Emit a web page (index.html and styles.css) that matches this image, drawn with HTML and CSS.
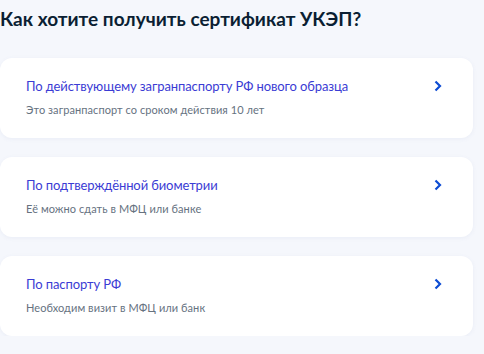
FILE: index.html
```html
<!DOCTYPE html>
<html lang="ru">
<head>
  <meta charset="UTF-8">
  <title>Сертификат УКЭП</title>
  <link rel="stylesheet" href="styles.css">
</head>
<body>

<div class="page">
  <h1>Как хотите получить сертификат УКЭП?</h1>

  <div class="options">
    <a class="card" href="#">
      <div class="card-text">
        <div class="card-title">По действующему загранпаспорту РФ нового образца</div>
        <div class="card-sub">Это загранпаспорт со сроком действия 10 лет</div>
      </div>
      <svg class="chevron" width="10" height="12" viewBox="0 0 10 12"><path d="M2.5 1.5 L7 6 L2.5 10.5" fill="none" stroke="#0d4cd3" stroke-width="2.2"/></svg>
    </a>

    <a class="card" href="#">
      <div class="card-text">
        <div class="card-title">По подтверждённой биометрии</div>
        <div class="card-sub">Её можно сдать в МФЦ или банке</div>
      </div>
      <svg class="chevron" width="10" height="12" viewBox="0 0 10 12"><path d="M2.5 1.5 L7 6 L2.5 10.5" fill="none" stroke="#0d4cd3" stroke-width="2.2"/></svg>
    </a>

    <a class="card" href="#">
      <div class="card-text">
        <div class="card-title">По паспорту РФ</div>
        <div class="card-sub">Необходим визит в МФЦ или банк</div>
      </div>
      <svg class="chevron" width="10" height="12" viewBox="0 0 10 12"><path d="M2.5 1.5 L7 6 L2.5 10.5" fill="none" stroke="#0d4cd3" stroke-width="2.2"/></svg>
    </a>
  </div>
</div>

</body>
</html>
```

FILE: styles.css
```css
body {
  margin: 0;
  font-family: Lato, "Open Sans", sans-serif;
  background: #f5f7fc;
  color: #0b1f33;
}

.page {
  width: 473px;
}

h1 {
  margin: 0;
  padding-top: 5px;
  font-size: 19px;
  line-height: 28px;
  font-weight: 700;
}

.options {
  margin-top: 25px;
  display: flex;
  flex-direction: column;
  gap: 19px;
}

.card {
  display: flex;
  justify-content: space-between;
  align-items: flex-start;
  height: 80px;
  box-sizing: border-box;
  padding: 18px 30px 20px 26px;
  background: #fff;
  border-radius: 12px;
  box-shadow: 0 1px 4px rgba(100, 120, 180, 0.08);
  text-decoration: none;
}

.card-title {
  font-size: 13px;
  line-height: 20px;
  letter-spacing: -0.1px;
  color: #3b3cd4;
}

.card-sub {
  margin-top: 6px;
  font-size: 11px;
  line-height: 16px;
  letter-spacing: 0.07px;
  color: #66727f;
}

.chevron {
  margin-top: 4px;
  flex-shrink: 0;
}
```
